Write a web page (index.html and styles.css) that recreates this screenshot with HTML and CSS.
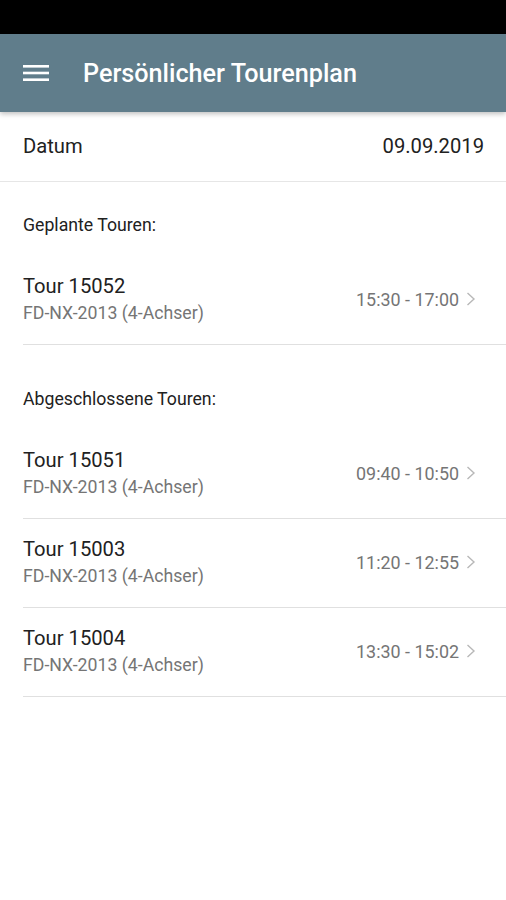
FILE: index.html
```html
<!DOCTYPE html>
<html lang="de">
<head>
<meta charset="UTF-8" />
<meta name="viewport" content="width=device-width, initial-scale=1" />
<title>Persönlicher Tourenplan</title>
<link rel="stylesheet" href="styles.css">
</head>
<body>
  <div class="status-bar"></div>

  <header class="app-bar">
    <svg class="menu-icon" width="26" height="18" viewBox="0 0 26 18">
      <rect x="0" y="1" width="26" height="2.6" fill="#fff" />
      <rect x="0" y="7.7" width="26" height="2.6" fill="#fff" />
      <rect x="0" y="14.4" width="26" height="2.6" fill="#fff" />
    </svg>
    <h1>Persönlicher Tourenplan</h1>
  </header>

  <div class="date-row">
    <span>Datum</span>
    <span>09.09.2019</span>
  </div>

  <section class="section">
    <h2>Geplante Touren:</h2>
    <ul class="tour-list">
      <li class="tour">
        <div class="tour-info">
          <div class="tour-name">Tour 15052</div>
          <div class="tour-truck">FD-NX-2013 (4-Achser)</div>
        </div>
        <span class="tour-time">15:30 - 17:00</span>
        <svg class="chevron" width="10" height="14" viewBox="0 0 10 14"><path d="M1.5 1 L8 7 L1.5 13" fill="none" stroke="#b8b8b8" stroke-width="1.4" /></svg>
      </li>
    </ul>
  </section>

  <section class="section">
    <h2>Abgeschlossene Touren:</h2>
    <ul class="tour-list">
      <li class="tour">
        <div class="tour-info">
          <div class="tour-name">Tour 15051</div>
          <div class="tour-truck">FD-NX-2013 (4-Achser)</div>
        </div>
        <span class="tour-time">09:40 - 10:50</span>
        <svg class="chevron" width="10" height="14" viewBox="0 0 10 14"><path d="M1.5 1 L8 7 L1.5 13" fill="none" stroke="#b8b8b8" stroke-width="1.4" /></svg>
      </li>
      <li class="tour">
        <div class="tour-info">
          <div class="tour-name">Tour 15003</div>
          <div class="tour-truck">FD-NX-2013 (4-Achser)</div>
        </div>
        <span class="tour-time">11:20 - 12:55</span>
        <svg class="chevron" width="10" height="14" viewBox="0 0 10 14"><path d="M1.5 1 L8 7 L1.5 13" fill="none" stroke="#b8b8b8" stroke-width="1.4" /></svg>
      </li>
      <li class="tour">
        <div class="tour-info">
          <div class="tour-name">Tour 15004</div>
          <div class="tour-truck">FD-NX-2013 (4-Achser)</div>
        </div>
        <span class="tour-time">13:30 - 15:02</span>
        <svg class="chevron" width="10" height="14" viewBox="0 0 10 14"><path d="M1.5 1 L8 7 L1.5 13" fill="none" stroke="#b8b8b8" stroke-width="1.4" /></svg>
      </li>
    </ul>
  </section>
</body>
</html>
```

FILE: styles.css
```css
* {
  box-sizing: border-box;
}

body {
  margin: 0;
  font-family: Roboto, 'Noto Sans', sans-serif;
  background: #fff;
  color: #212121;
}

.status-bar {
  height: 34px;
  background: #000;
}

.app-bar {
  height: 78px;
  display: flex;
  align-items: center;
  padding-left: 23px;
  background: #607d8b;
  box-shadow: 0 2px 5px rgba(0,0,0,0.25);
  position: relative;
}

.menu-icon {
  flex: none;
}

.app-bar h1 {
  margin: 0 0 0 34px;
  font-size: 25.2px;
  font-weight: 500;
  color: #fff;
}

.date-row {
  display: flex;
  justify-content: space-between;
  padding: 24px 22px 24px 23px;
  font-size: 20.2px;
  line-height: 21px;
  border-bottom: 1px solid #e6e6e6;
}

.section {
  padding-top: 33px;
}

.section + .section {
  padding-top: 44px;
}

.section h2 {
  margin: 0 0 21px 23px;
  font-size: 17.7px;
  line-height: 20px;
  font-weight: 400;
  color: #212121;
}

.tour-list {
  list-style: none;
  margin: 0 0 0 23px;
  padding: 0;
}

.tour {
  display: flex;
  align-items: center;
  padding: 17px 30px 17px 0;
  border-bottom: 1px solid #e0e0e0;
}

.tour-info {
  flex: 1;
}

.tour-name {
  font-size: 20.2px;
  line-height: 27px;
}

.tour-truck {
  font-size: 17.7px;
  line-height: 27px;
  color: #757575;
}

.tour-time {
  font-size: 17.9px;
  color: #757575;
  margin: 0 7px 2px 0;
}

.chevron {
  flex: none;
  margin-bottom: 2px;
}
```
